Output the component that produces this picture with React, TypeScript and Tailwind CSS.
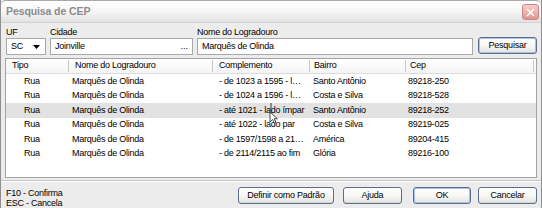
import React from "react";

type Row = {
  tipo: string;
  nome: string;
  complemento: string;
  bairro: string;
  cep: string;
};

const rows: Row[] = [
  { tipo: "Rua", nome: "Marquês de Olinda", complemento: "- de 1023 a 1595 - l…", bairro: "Santo Antônio", cep: "89218-250" },
  { tipo: "Rua", nome: "Marquês de Olinda", complemento: "- de 1024 a 1596 - l…", bairro: "Costa e Silva", cep: "89218-528" },
  { tipo: "Rua", nome: "Marquês de Olinda", complemento: "- até 1021 - lado ímpar", bairro: "Santo Antônio", cep: "89218-252" },
  { tipo: "Rua", nome: "Marquês de Olinda", complemento: "- até 1022 - lado par", bairro: "Costa e Silva", cep: "89219-025" },
  { tipo: "Rua", nome: "Marquês de Olinda", complemento: "- de 1597/1598 a 21…", bairro: "América", cep: "89204-415" },
  { tipo: "Rua", nome: "Marquês de Olinda", complemento: "- de 2114/2115 ao fim", bairro: "Glória", cep: "89216-100" },
];

const cols = "grid grid-cols-[63px_144px_97px_96px_128px_1fr]";

function HeaderCell({ label, pad }: { label: string; pad: string }) {
  return (
    <div className={`flex items-center justify-between ${pad}`}>
      <span>{label}</span>
      <span className="w-px h-[12px] bg-[#c9c9c9]" />
    </div>
  );
}

function XpButton({ label, width, primary }: { label: string; width: string; primary?: boolean }) {
  return (
    <button
      className={`${width} h-[17px] rounded-[3px] border border-[#5d6c8c] bg-gradient-to-b from-white via-[#f7f7f5] to-[#e3e3de] text-[9px] leading-none ${
        primary ? "shadow-[inset_0_0_0_1px_#a9c2ea]" : "shadow-[inset_0_-1px_0_#d6d6d0]"
      }`}
    >
      {label}
    </button>
  );
}

export default function App() {
  return (
    <div className="relative w-[542px] h-[208px] overflow-hidden flex flex-col bg-[#ececec] border-x border-[#8f8f8f] font-['Liberation_Sans',Arial,sans-serif] text-[9px] tracking-[-0.25px] text-black">
      {/* Title bar */}
      <div className="h-[23px] shrink-0 flex items-center justify-between pl-[5px] pr-[2px] border-t border-[#a8a8a8] rounded-t-[5px] bg-gradient-to-b from-white via-[#f6f6f6] to-[#e2e2e2] border-b border-b-[#d2d2d2]">
        <span className="text-[10.5px] tracking-[-0.1px] text-[#8c8c8c] font-semibold">Pesquisa de CEP</span>
        <div className="w-[17px] h-[16px] mt-[1px] rounded-[3px] border border-[#c98886] bg-gradient-to-b from-[#f6cfcd] to-[#e19593] flex items-center justify-center">
          <svg width="9" height="9" viewBox="0 0 9 9">
            <path d="M1 1 L8 8 M8 1 L1 8" stroke="white" strokeWidth="1.6" />
          </svg>
        </div>
      </div>

      {/* Search fields */}
      <div className="flex items-end gap-[4px] pl-[5px] pr-[4px] pt-[4px]">
        <div className="flex flex-col w-[40px]">
          <span className="leading-[11px]">UF</span>
          <div className="h-[17px] bg-white border border-[#a9a9a9] flex items-center justify-between pl-[4px] pr-[5px]">
            <span>SC</span>
            <svg width="7" height="4" viewBox="0 0 7 4">
              <path d="M0 0 L7 0 L3.5 4 Z" fill="black" />
            </svg>
          </div>
        </div>
        <div className="flex flex-col w-[143px]">
          <span className="leading-[11px]">Cidade</span>
          <div className="h-[17px] bg-white border border-[#a9a9a9] flex items-center justify-between pl-[4px] pr-[4px]">
            <span>Joinville</span>
            <span className="tracking-normal">...</span>
          </div>
        </div>
        <div className="flex flex-col w-[276px]">
          <span className="leading-[11px]">Nome do Logradouro</span>
          <div className="h-[17px] bg-white border border-[#a9a9a9] flex items-center pl-[4px]">
            <span>Marquês de Olinda</span>
          </div>
        </div>
        <div className="ml-[1px] mb-[1px]">
          <XpButton label="Pesquisar" width="w-[59px]" primary />
        </div>
      </div>

      {/* Results table */}
      <div className="mt-[3px] ml-[4px] mr-[4px] h-[120px] bg-white border border-[#a3a3a3] flex flex-col">
        <div className={`${cols} h-[15px] shrink-0 border-b border-[#dcdcdc] bg-gradient-to-b from-white to-[#f4f4f4]`}>
          <HeaderCell label="Tipo" pad="pl-[6px]" />
          <HeaderCell label="Nome do Logradouro" pad="pl-[6px]" />
          <HeaderCell label="Complemento" pad="pl-[6px]" />
          <HeaderCell label="Bairro" pad="pl-[4px]" />
          <HeaderCell label="Cep" pad="pl-[4px]" />
          <div />
        </div>
        {rows.map((r, i) => (
          <div key={i} className={`${cols} h-[14.5px] items-center whitespace-nowrap ${i === 2 ? "bg-[#e2e2e2]" : ""}`}>
            <span className="pl-[18px]">{r.tipo}</span>
            <span className="pl-[3px]">{r.nome}</span>
            <span className="pl-[6px] overflow-hidden">{r.complemento}</span>
            <span className="pl-[3px]">{r.bairro}</span>
            <span className="pl-[2px]">{r.cep}</span>
            <span />
          </div>
        ))}
      </div>

      {/* Footer */}
      <div className="mt-[2px] flex-1 border-t border-[#c4c4c4] shadow-[inset_0_1px_0_white] flex items-start justify-between pl-[5px] pr-[4px] pt-[6px]">
        <div className="flex flex-col leading-[10px] pt-[1px]">
          <span>F10 - Confirma</span>
          <span>ESC - Cancela</span>
        </div>
        <div className="flex items-center">
          <XpButton label="Definir como Padrão" width="w-[96px]" />
          <div className="ml-[9px]">
            <XpButton label="Ajuda" width="w-[59px]" />
          </div>
          <div className="ml-[11px]">
            <XpButton label="OK" width="w-[58px]" primary />
          </div>
          <div className="ml-[7px]">
            <XpButton label="Cancelar" width="w-[59px]" />
          </div>
        </div>
      </div>

      {/* Mouse cursor */}
      <svg className="absolute left-[266px] top-[103px]" width="14" height="20" viewBox="0 0 14 20">
        <path d="M4 0 L4 10" stroke="#333" strokeWidth="1" />
        <path d="M3 9 L3 19 L5.5 16.5 L7.5 20 L9 19.3 L7 15.8 L10.5 15.8 Z" fill="white" stroke="#222" strokeWidth="0.8" />
      </svg>
    </div>
  );
}
